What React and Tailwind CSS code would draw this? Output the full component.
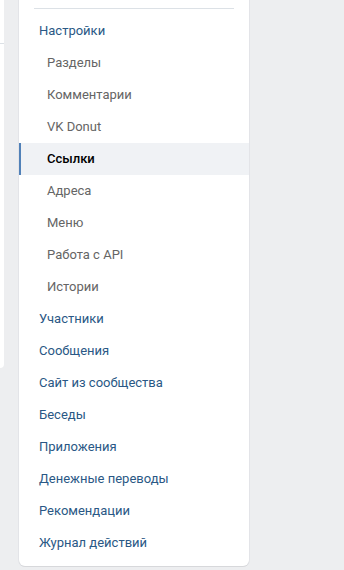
import { useState } from 'react'

const items = [
  { label: 'Настройки', top: true },
  { label: 'Разделы' },
  { label: 'Комментарии' },
  { label: 'VK Donut' },
  { label: 'Ссылки', active: true },
  { label: 'Адреса' },
  { label: 'Меню' },
  { label: 'Работа с API' },
  { label: 'Истории' },
  { label: 'Участники', top: true },
  { label: 'Сообщения', top: true },
  { label: 'Сайт из сообщества', top: true },
  { label: 'Беседы', top: true },
  { label: 'Приложения', top: true },
  { label: 'Денежные переводы', top: true },
  { label: 'Рекомендации', top: true },
  { label: 'Журнал действий', top: true },
]

function MenuItem({ item, active, onClick }) {
  if (active) {
    return (
      <div
        onClick={onClick}
        className="h-8 flex items-center bg-[#f0f2f5] border-l-2 border-[#5181b8] pl-[26px] text-black font-medium cursor-pointer"
      >
        {item.label}
      </div>
    )
  }
  return (
    <div
      onClick={onClick}
      className={
        item.top
          ? 'h-8 flex items-center pl-5 text-[#2a5885] cursor-pointer hover:bg-[#f0f2f5]'
          : 'h-8 flex items-center pl-7 text-[#656565] cursor-pointer hover:bg-[#f0f2f5]'
      }
    >
      {item.label}
    </div>
  )
}

export default function App() {
  const [current, setCurrent] = useState('Ссылки')

  return (
    <div
      className="w-[344px] h-[570px] bg-[#edeef0] flex items-start overflow-hidden text-[13px]"
      style={{ fontFamily: 'Roboto, "Open Sans", sans-serif' }}
    >
      <div className="w-[4px] h-[368px] bg-white rounded-br-md shrink-0">
        <div className="h-[44px] border-b border-[#dce1e6]"></div>
      </div>
      <div className="ml-[15px] w-[230px] mt-[-10px] bg-white rounded-b-md shadow-[0_1px_0_0_#d7d8db,0_0_0_1px_#e3e4e8] pt-[18px] pb-[7px]">
        <div className="mx-[15px] h-px bg-[#dce1e6]"></div>
        <div className="pt-[6px]">
          {items.map((item) => (
            <MenuItem
              key={item.label}
              item={item}
              active={current === item.label}
              onClick={() => setCurrent(item.label)}
            />
          ))}
        </div>
      </div>
    </div>
  )
}
